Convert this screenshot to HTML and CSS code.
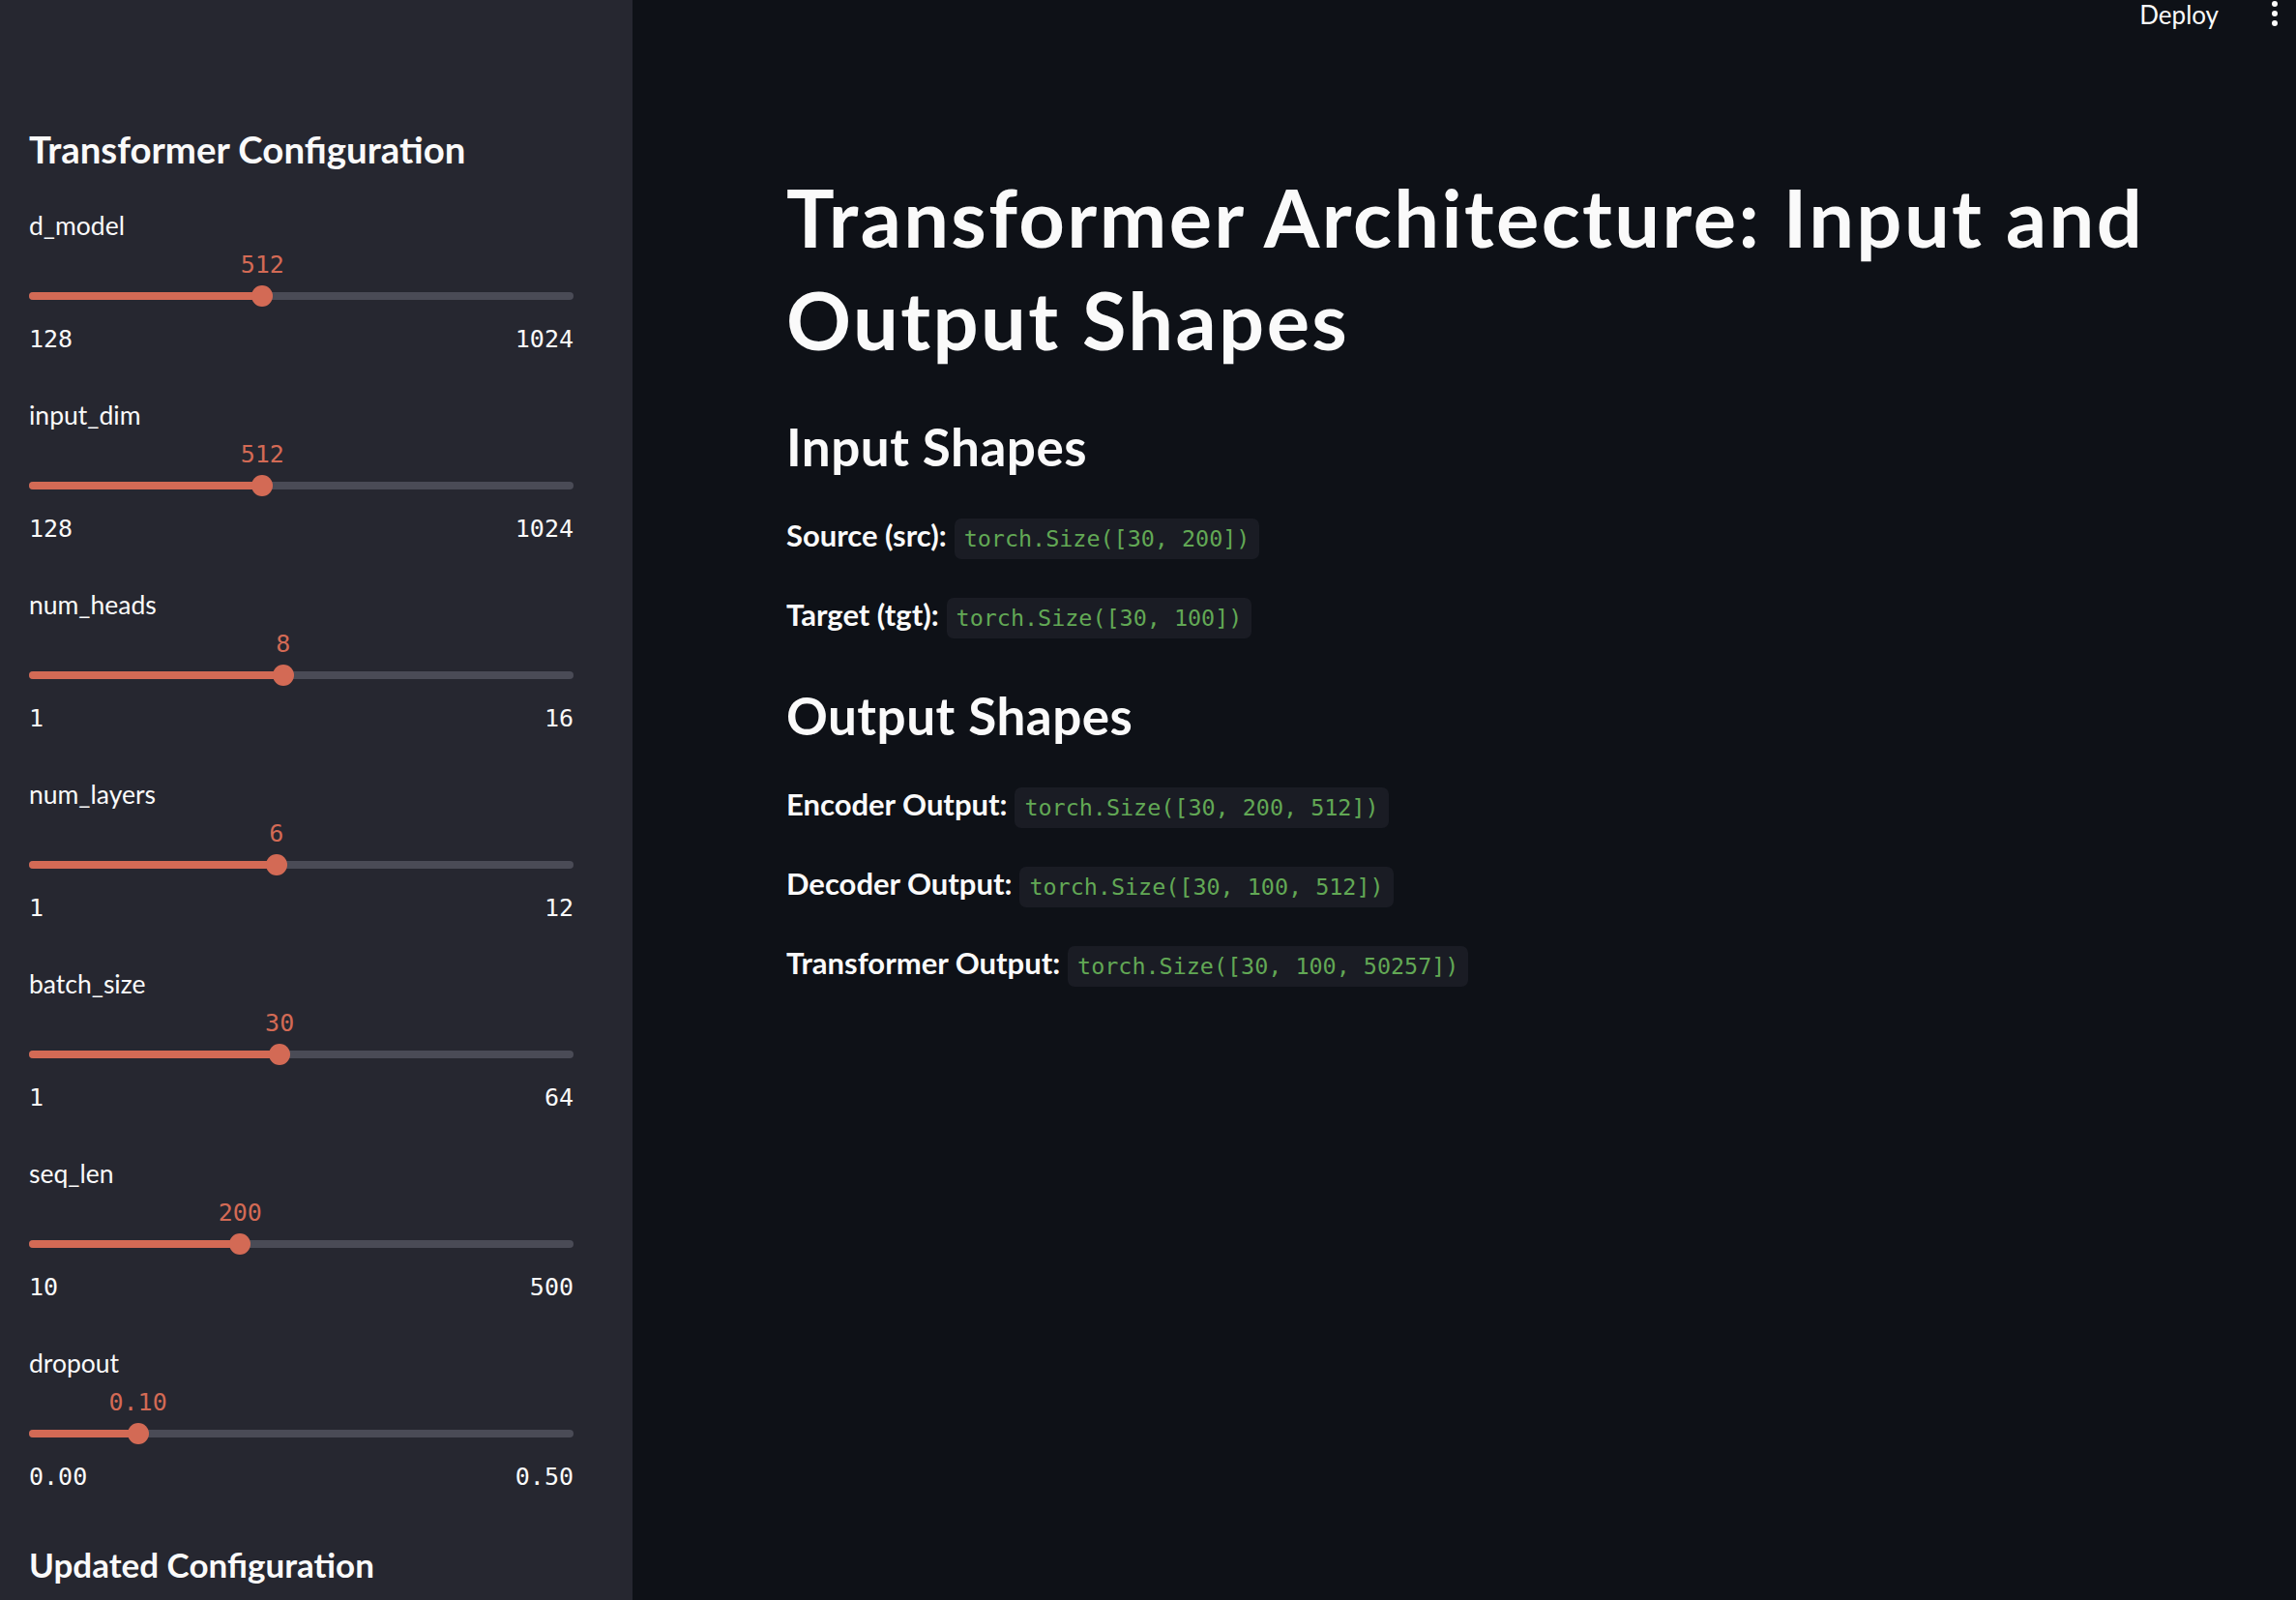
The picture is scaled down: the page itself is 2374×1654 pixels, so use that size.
FILE: index.html
```html
<!DOCTYPE html>
<html lang="en">
<head>
<meta charset="utf-8">
<title>Transformer Architecture</title>
<link rel="stylesheet" href="styles.css">
</head>
<body>
<div class="app">
  <aside class="sidebar">
    <h2 class="side-h">Transformer Configuration</h2>

    <div class="slider">
      <div class="s-label">d_model</div>
      <div class="s-body"><div class="s-track"><div class="s-fill" style="width:42.86%"></div><div class="s-thumb" style="left:42.86%"><span class="s-val">512</span></div></div></div>
      <div class="s-minmax"><span>128</span><span>1024</span></div>
    </div>

    <div class="slider">
      <div class="s-label">input_dim</div>
      <div class="s-body"><div class="s-track"><div class="s-fill" style="width:42.86%"></div><div class="s-thumb" style="left:42.86%"><span class="s-val">512</span></div></div></div>
      <div class="s-minmax"><span>128</span><span>1024</span></div>
    </div>

    <div class="slider">
      <div class="s-label">num_heads</div>
      <div class="s-body"><div class="s-track"><div class="s-fill" style="width:46.67%"></div><div class="s-thumb" style="left:46.67%"><span class="s-val">8</span></div></div></div>
      <div class="s-minmax"><span>1</span><span>16</span></div>
    </div>

    <div class="slider">
      <div class="s-label">num_layers</div>
      <div class="s-body"><div class="s-track"><div class="s-fill" style="width:45.45%"></div><div class="s-thumb" style="left:45.45%"><span class="s-val">6</span></div></div></div>
      <div class="s-minmax"><span>1</span><span>12</span></div>
    </div>

    <div class="slider">
      <div class="s-label">batch_size</div>
      <div class="s-body"><div class="s-track"><div class="s-fill" style="width:46.03%"></div><div class="s-thumb" style="left:46.03%"><span class="s-val">30</span></div></div></div>
      <div class="s-minmax"><span>1</span><span>64</span></div>
    </div>

    <div class="slider">
      <div class="s-label">seq_len</div>
      <div class="s-body"><div class="s-track"><div class="s-fill" style="width:38.78%"></div><div class="s-thumb" style="left:38.78%"><span class="s-val">200</span></div></div></div>
      <div class="s-minmax"><span>10</span><span>500</span></div>
    </div>

    <div class="slider">
      <div class="s-label">dropout</div>
      <div class="s-body"><div class="s-track"><div class="s-fill" style="width:20%"></div><div class="s-thumb" style="left:20%"><span class="s-val">0.10</span></div></div></div>
      <div class="s-minmax"><span>0.00</span><span>0.50</span></div>
    </div>

    <h2 class="side-h side-h-last">Updated Configuration</h2>
  </aside>

  <main class="main">
    <header class="topbar">
      <span class="deploy">Deploy</span>
      <svg class="kebab" width="8" height="30" viewBox="0 0 8 30"><circle cx="4" cy="4" r="3" fill="#fafafa"/><circle cx="4" cy="14" r="3" fill="#fafafa"/><circle cx="4" cy="24" r="3" fill="#fafafa"/></svg>
    </header>
    <div class="block">
      <h1 class="title">Transformer Architecture: Input and Output Shapes</h1>
      <h3 class="sub">Input Shapes</h3>
      <p class="row"><strong>Source (src):</strong> <code>torch.Size([30, 200])</code></p>
      <p class="row"><strong>Target (tgt):</strong> <code>torch.Size([30, 100])</code></p>
      <h3 class="sub">Output Shapes</h3>
      <p class="row"><strong>Encoder Output:</strong> <code>torch.Size([30, 200, 512])</code></p>
      <p class="row"><strong>Decoder Output:</strong> <code>torch.Size([30, 100, 512])</code></p>
      <p class="row"><strong>Transformer Output:</strong> <code>torch.Size([30, 100, 50257])</code></p>
    </div>
  </main>
</div>
</body>
</html>
```

FILE: styles.css
```css
* { box-sizing: border-box; }

html, body {
  margin: 0;
  padding: 0;
  height: 100%;
  background: #0e1117;
  color: #fafafa;
  font-family: Lato, "Open Sans", sans-serif;
}

.app {
  display: flex;
  height: 1654px;
  overflow: hidden;
}

/* ---------- Sidebar ---------- */
.sidebar {
  width: 654px;
  flex: 0 0 654px;
  background: #262730;
  padding: 130px 61px 0 30px;
  overflow: hidden;
}

.side-h {
  margin: 0 0 35px 0;
  font-size: 38.4px;
  line-height: 48px;
  font-weight: 700;
  color: #fafafa;
}

.side-h-last {
  margin-top: 48px;
  font-size: 35px;
}

.slider {
  margin-bottom: 40px;
}

.s-label {
  font-size: 26.5px;
  line-height: 40px;
  height: 40px;
  color: #fafafa;
}

.s-body {
  padding-top: 49px;
  padding-bottom: 7px;
}

.s-track {
  position: relative;
  height: 8px;
  border-radius: 4px;
  background: #4a4b56;
}

.s-fill {
  height: 8px;
  border-radius: 4px;
  background: #d36a55;
}

.s-thumb {
  position: absolute;
  top: 50%;
  width: 22px;
  height: 22px;
  border-radius: 50%;
  background: #d36a55;
  transform: translate(-50%, -50%);
}

.s-val {
  position: absolute;
  left: 50%;
  top: -36px;
  transform: translateX(-50%);
  font-family: "DejaVu Sans Mono", "Liberation Mono", monospace;
  font-size: 25px;
  line-height: 30px;
  color: #d36a55;
  white-space: nowrap;
}

.s-minmax {
  display: flex;
  justify-content: space-between;
  margin-top: 16px;
  font-family: "DejaVu Sans Mono", "Liberation Mono", monospace;
  font-size: 25px;
  line-height: 36px;
  color: #fafafa;
}

/* ---------- Main ---------- */
.main {
  flex: 1;
  position: relative;
  background: #0e1117;
}

.topbar {
  position: absolute;
  top: 0;
  right: 0;
  display: flex;
  align-items: flex-start;
  gap: 54px;
  padding-right: 18px;
}

.deploy {
  font-size: 26px;
  line-height: 30px;
  color: #fafafa;
}

.kebab {
  display: block;
}

.block {
  width: 1408px;
  margin-left: 159px;
  padding-top: 171px;
}

.title {
  margin: 0 0 48px 0;
  font-size: 83px;
  line-height: 106px;
  letter-spacing: 2.4px;
  font-weight: 700;
  color: #fafafa;
}

.sub {
  margin: 48px 0 35px 0;
  font-size: 53px;
  line-height: 62px;
  letter-spacing: 0.5px;
  font-weight: 700;
  color: #fafafa;
}

.row {
  margin: 0 0 31px 0;
  font-size: 31px;
  line-height: 51px;
  color: #fafafa;
}

.row strong {
  font-weight: 700;
}

.row code {
  font-family: "DejaVu Sans Mono", "Liberation Mono", monospace;
  font-size: 23.4px;
  line-height: 1;
  color: #62a855;
  background: #1a1c24;
  padding: 7px 10px;
  border-radius: 7px;
}
```
